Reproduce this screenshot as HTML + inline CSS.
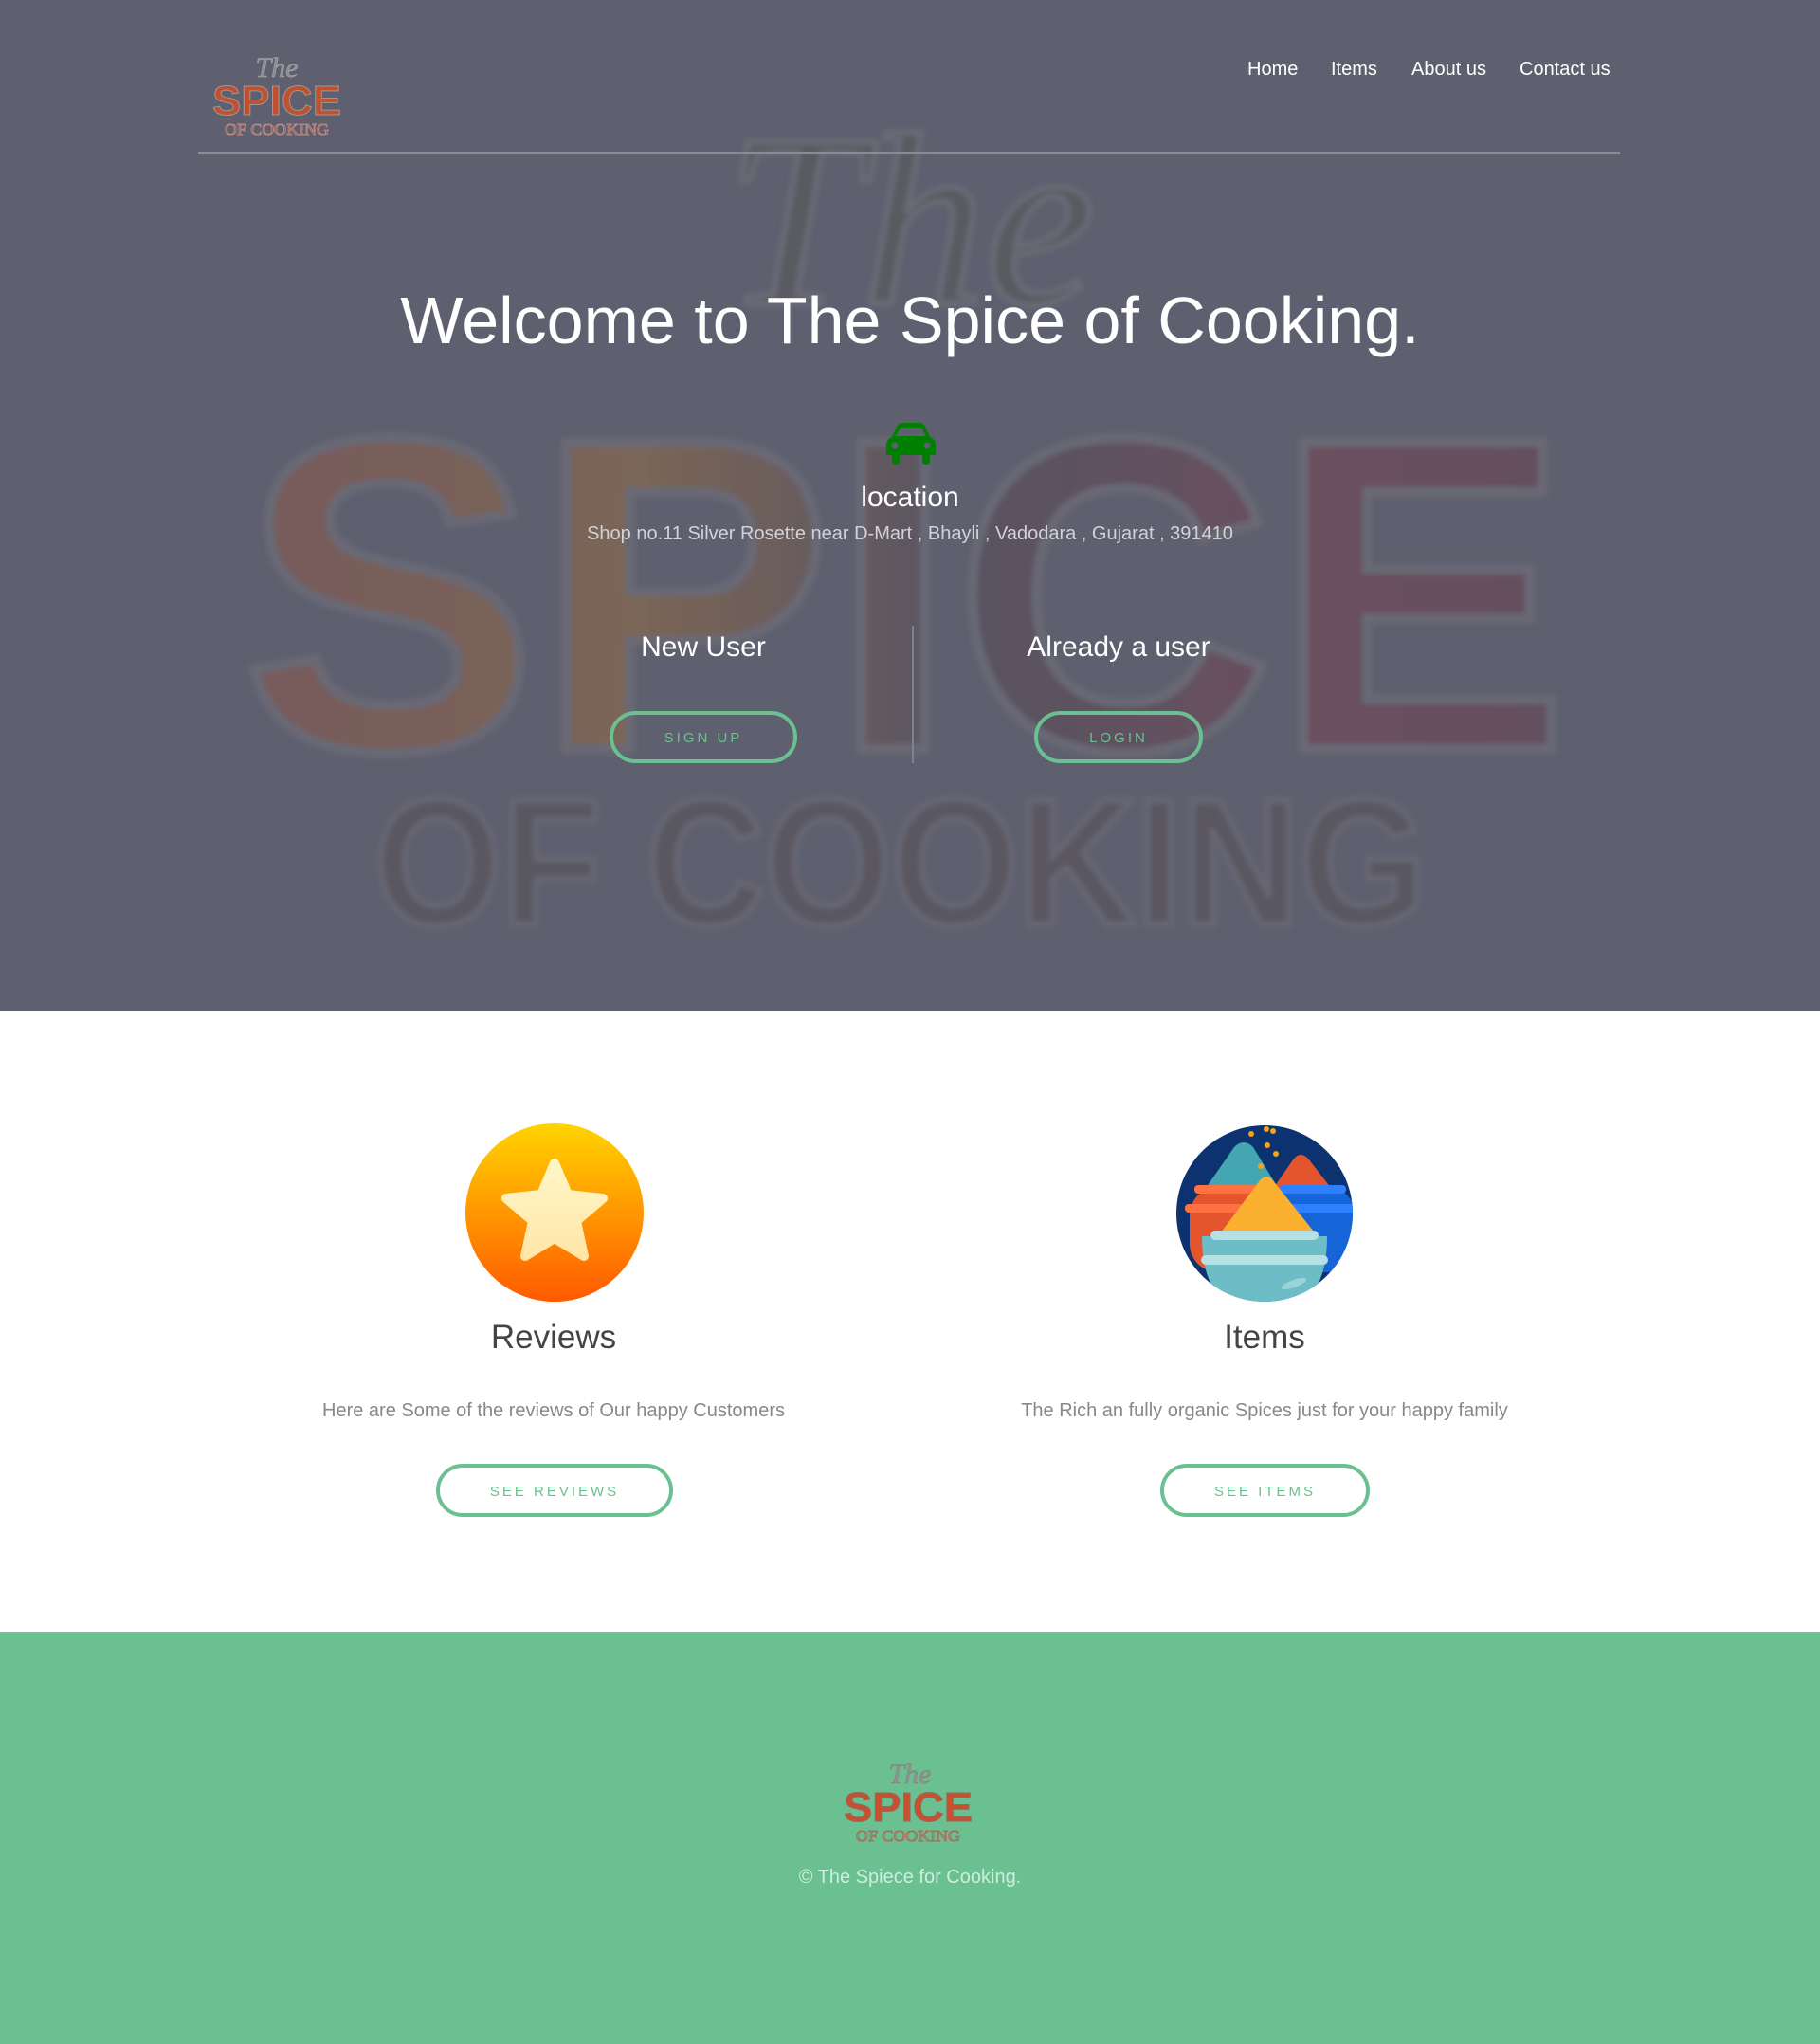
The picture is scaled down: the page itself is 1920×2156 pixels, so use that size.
<!DOCTYPE html>
<html><head><meta charset="utf-8">
<style>
*{margin:0;padding:0;box-sizing:border-box}
body{width:1920px;height:2156px;font-family:"Liberation Sans",Arial,sans-serif;background:#fff;overflow:hidden}
.hero{position:absolute;left:0;top:0;width:1920px;height:1066px;background:#5f606f;overflow:hidden}
.abs{position:absolute}
.nav a{position:absolute;top:62px;color:#fff;font-size:20px;text-decoration:none}
.btn{position:absolute;border:4px solid #6bc091;border-radius:30px;color:#6bc091;font-size:15px;letter-spacing:3px;text-align:center;display:flex;align-items:center;justify-content:center;padding-top:2px}
.c{position:absolute;text-align:center}
</style></head><body>
<div class="hero">
<svg class="abs" style="left:0;top:0" width="1920" height="1066">
 <defs>
  <linearGradient id="sp" x1="0" x2="1" y1="0" y2="0">
   <stop offset="0" stop-color="#7e5a55"/><stop offset="0.3" stop-color="#84684f"/><stop offset="0.55" stop-color="#55505e"/><stop offset="0.8" stop-color="#704a58"/><stop offset="1" stop-color="#644a5a"/>
  </linearGradient>
  <filter id="bl"><feGaussianBlur stdDeviation="3"/></filter>
 </defs>
 <g filter="url(#bl)">
 <text x="960" y="320" text-anchor="middle" font-family="Liberation Serif" font-style="italic" font-size="260" fill="#58585f" stroke="#6e6e7a" stroke-width="6" opacity="0.8">The</text>
 <text x="955" y="790" text-anchor="middle" font-family="Liberation Sans" font-weight="bold" font-size="470" textLength="1400" lengthAdjust="spacingAndGlyphs" fill="url(#sp)" stroke="#6c6c78" stroke-width="10" opacity="0.75">SPICE</text>
 <text x="950" y="975" text-anchor="middle" font-family="Liberation Sans" font-weight="bold" font-size="190" textLength="1110" lengthAdjust="spacingAndGlyphs" fill="#5a5560" stroke="#6a6a76" stroke-width="6" opacity="0.85">OF COOKING</text>
 </g>
</svg>
<svg class="abs" style="left:222px;top:55px" width="142" height="90">
 <text x="70" y="26" text-anchor="middle" font-family="Liberation Serif" font-style="italic" font-size="30" fill="#8a8a95" stroke="#aaa" stroke-width="0.6">The</text>
 <text x="70" y="66" text-anchor="middle" font-family="Liberation Sans" font-weight="bold" font-size="44" textLength="136" lengthAdjust="spacingAndGlyphs" fill="#c0502e" stroke="#999" stroke-width="1">SPICE</text>
 <text x="70" y="87" text-anchor="middle" font-family="Liberation Serif" font-size="17" textLength="110" lengthAdjust="spacingAndGlyphs" fill="none" stroke="#c0857a" stroke-width="1">OF COOKING</text>
</svg>
<div class="nav"><a style="left:1316px">Home</a><a style="left:1404px">Items</a><a style="left:1489px">About us</a><a style="left:1603px">Contact us</a></div>
<div class="abs" style="left:209px;top:160px;width:1500px;height:2px;background:#8a8b96"></div>
<div class="c" style="left:0;width:1920px;top:298px;font-size:70px;color:#fff">Welcome to The Spice of Cooking.</div>
<svg class="abs" style="left:934px;top:446px" width="54" height="44" viewBox="0 0 54 44">
 <path fill="#008000" d="M12 4 Q14 0 18 0 H36 Q40 0 42 4 L47 15 Q53 17 53 23 V34 H47 V40 Q47 44 43 44 Q39 44 39 40 V34 H15 V40 Q15 44 11 44 Q7 44 7 40 V34 H1 V23 Q1 17 7 15 Z M11 14 H43 L38 5 H16 Z"/>
 <circle cx="10" cy="24" r="3.5" fill="#5f606f"/><circle cx="44" cy="24" r="3.5" fill="#5f606f"/>
</svg>
<div class="c" style="left:0;width:1920px;top:508px;font-size:30px;color:#fff">location</div>
<div class="c" style="left:0;width:1920px;top:552px;font-size:20px;color:#d2d2d8">Shop no.11 Silver Rosette near D-Mart , Bhayli , Vadodara , Gujarat , 391410</div>
<div class="abs" style="left:962px;top:660px;width:2px;height:145px;background:#80818c"></div>
<div class="c" style="left:542px;width:400px;top:666px;font-size:30px;color:#fff">New User</div>
<div class="c" style="left:980px;width:400px;top:666px;font-size:30px;color:#fff">Already a user</div>
<div class="btn" style="left:643px;top:750px;width:198px;height:55px">SIGN UP</div>
<div class="btn" style="left:1091px;top:750px;width:178px;height:55px">LOGIN</div>
</div>

<svg class="abs" style="left:491px;top:1185px" width="188" height="188" viewBox="0 0 188 188">
 <defs><linearGradient id="og" x1="0" y1="0" x2="0" y2="1"><stop offset="0" stop-color="#ffd400"/><stop offset="1" stop-color="#ff5a00"/></linearGradient>
 <linearGradient id="sg" x1="0" y1="0" x2="0" y2="1"><stop offset="0" stop-color="#fff6c8"/><stop offset="1" stop-color="#ffe6a8"/></linearGradient></defs>
 <circle cx="94" cy="94" r="94" fill="url(#og)"/>
 <path fill="url(#sg)" stroke="url(#sg)" stroke-width="10" stroke-linejoin="round" d="M94 42 L108 75 L145 79 L117 103 L125 140 L94 121 L63 140 L71 103 L43 79 L80 75 Z"/>
</svg>
<svg class="abs" style="left:1240px;top:1186px" width="188" height="188" viewBox="0 0 188 188">
 <defs><clipPath id="cc"><circle cx="94" cy="94" r="93"/></clipPath></defs>
 <circle cx="94" cy="94" r="93" fill="#0c3370"/>
 <g clip-path="url(#cc)">
  <path d="M30 70 L62 24 Q72 14 82 24 L110 70 Z" fill="#44a6b0"/>
  <path d="M100 72 L125 36 Q132 28 140 36 L168 72 Z" fill="#e4552e"/>
  <rect x="15" y="66" width="80" height="90" rx="30" fill="#e4552e"/>
  <rect x="100" y="66" width="90" height="90" rx="30" fill="#1565d8"/>
  <rect x="20" y="64" width="80" height="9" rx="4" fill="#ff7043"/>
  <rect x="10" y="84" width="85" height="9" rx="4" fill="#ff7043"/>
  <rect x="110" y="64" width="70" height="9" rx="4" fill="#2f80ff"/>
  <rect x="110" y="84" width="85" height="9" rx="4" fill="#2f80ff"/>
  <path d="M45 118 L90 58 Q96 52 102 58 L150 118 Z" fill="#fbb12f"/>
  <path d="M28 118 H160 Q160 200 94 200 Q28 200 28 118 Z" fill="#6cbdc5"/>
  <rect x="37" y="112" width="114" height="10" rx="5" fill="#b6e0e4"/>
  <rect x="27" y="138" width="134" height="10" rx="5" fill="#b6e0e4"/>
  <ellipse cx="125" cy="168" rx="14" ry="4" transform="rotate(-20 125 168)" fill="#9ad3d8"/>
 </g>
 <g fill="#f4a21a"><circle cx="80" cy="10" r="3"/><circle cx="96" cy="5" r="3"/><circle cx="103" cy="7" r="3"/><circle cx="97" cy="22" r="3"/><circle cx="106" cy="31" r="3"/><circle cx="90" cy="44" r="3"/></g>
</svg>
<div class="c" style="left:384px;width:400px;top:1391px;font-size:35px;color:#444">Reviews</div>
<div class="c" style="left:1134px;width:400px;top:1391px;font-size:35px;color:#444">Items</div>
<div class="c" style="left:234px;width:700px;top:1477px;font-size:20px;color:#888">Here are Some of the reviews of Our happy Customers</div>
<div class="c" style="left:984px;width:700px;top:1477px;font-size:20px;color:#888">The Rich an fully organic Spices just for your happy family</div>
<div class="btn" style="left:460px;top:1544px;width:250px;height:56px">SEE REVIEWS</div>
<div class="btn" style="left:1224px;top:1544px;width:221px;height:56px">SEE ITEMS</div>

<div class="abs" style="left:0;top:1721px;width:1920px;height:435px;background:#6bc091"></div>
<svg class="abs" style="left:888px;top:1855px" width="142" height="90">
 <text x="72" y="26" text-anchor="middle" font-family="Liberation Serif" font-style="italic" font-size="30" fill="#7aa088" stroke="#a07080" stroke-width="0.6">The</text>
 <text x="70" y="66" text-anchor="middle" font-family="Liberation Sans" font-weight="bold" font-size="44" textLength="136" lengthAdjust="spacingAndGlyphs" fill="#c9502e" stroke="#8a7060" stroke-width="1">SPICE</text>
 <text x="70" y="87" text-anchor="middle" font-family="Liberation Serif" font-size="17" textLength="110" lengthAdjust="spacingAndGlyphs" fill="none" stroke="#b06a5a" stroke-width="1">OF COOKING</text>
</svg>
<div class="c" style="left:0;width:1920px;top:1969px;font-size:20px;color:#cdeedd">© The Spiece for Cooking.</div>
</body></html>
